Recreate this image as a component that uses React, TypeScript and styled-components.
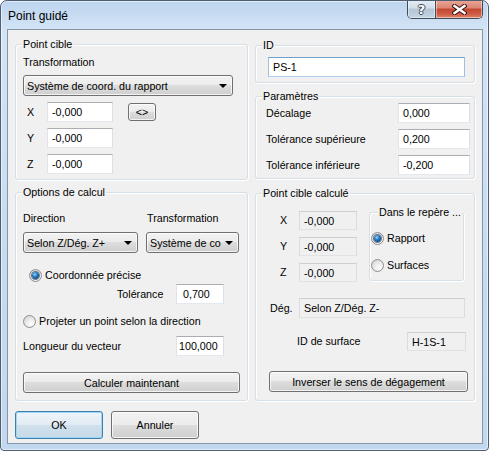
import styled, { createGlobalStyle, css } from "styled-components";

const GlobalStyle = createGlobalStyle`
  * { box-sizing: border-box; }
  html, body { margin: 0; padding: 0; background: #ffffff; }
  body {
    font-family: "Liberation Sans", Arial, sans-serif;
    font-size: 10.7px;
    color: #000;
  }
`;

const Window = styled.div`
  width: 489px;
  height: 451px;
  display: flex;
  flex-direction: column;
  border: 1px solid #4f5e70;
  border-radius: 7px 7px 4px 4px;
  background: linear-gradient(180deg, #bcd4ee 0%, #d3e4f6 28px, #c6dbf1 60%, #c2d8f0 100%);
  box-shadow: inset 0 0 0 1px rgba(255, 255, 255, 0.55);
  overflow: hidden;
`;

const TitleBar = styled.div`
  height: 28px;
  flex: none;
  display: flex;
  align-items: flex-start;
  padding: 0 5px 0 7px;
`;

const Title = styled.div`
  flex: 1;
  font-size: 12px;
  line-height: 28px;
  padding-top: 1px;
`;

const CaptionGroup = styled.div`
  display: flex;
  height: 19px;
  margin-top: -1px;
  border: 1px solid #3f4c5c;
  border-top: none;
  border-radius: 0 0 5px 5px;
  overflow: hidden;
`;

const CaptionButton = styled.div<{ $kind: "help" | "close" }>`
  display: flex;
  align-items: center;
  justify-content: center;
  box-shadow: inset 0 0 0 1px rgba(255, 255, 255, 0.45);
  ${(p) =>
    p.$kind === "help"
      ? css`
          width: 27px;
          background: linear-gradient(180deg, #e6edf5 0%, #d3dee9 45%, #b4c5d7 50%, #c5d4e3 100%);
        `
      : css`
          width: 47px;
          border-left: 1px solid #3f4c5c;
          background: linear-gradient(180deg, #eaa89a 0%, #db8572 45%, #c4452f 50%, #cf5f47 80%, #e0866b 100%);
        `}
`;

const HelpGlyph = styled.span`
  font-family: "DejaVu Sans", sans-serif;
  font-weight: bold;
  font-size: 13px;
  line-height: 1;
  color: #fff;
  text-shadow: 1px 0 0 #3a4656, -1px 0 0 #3a4656, 0 1px 0 #3a4656, 0 -1px 0 #3a4656;
`;

const Client = styled.div`
  flex: 1;
  margin: 0 5px 6px 6px;
  padding: 0 7px;
  display: flex;
  flex-direction: column;
  background: #f0f0f0;
  border: 1px solid #8496a8;
`;

const Columns = styled.div`
  display: flex;
  gap: 7px;
  align-items: flex-start;
`;

const Column = styled.div<{ $w: number }>`
  width: ${(p) => p.$w}px;
  display: flex;
  flex-direction: column;
`;

const Group = styled.div<{ $h: number; $mt: number; $w?: number; $px?: number; $ml?: number }>`
  height: ${(p) => p.$h}px;
  ${(p) => p.$w && `width: ${p.$w}px; flex: none;`}
  margin-top: ${(p) => p.$mt}px;
  margin-left: ${(p) => p.$ml ?? 0}px;
  padding: 0 ${(p) => p.$px ?? 7}px;
  display: flex;
  flex-direction: column;
  align-items: flex-start;
  border: 1px solid #d5dfe5;
  border-radius: 3px;
  box-shadow: inset 1px 1px 0 #fff, 1px 1px 0 #fff;
`;

const Legend = styled.div<{ $ml?: number }>`
  margin: -7px 0 0 ${(p) => p.$ml ?? -1}px;
  padding: 0 1px;
  line-height: 13px;
  white-space: nowrap;
  background: #f0f0f0;
`;

const Label = styled.div<{ $w?: number; $mt?: number; $pl?: number }>`
  ${(p) => p.$w && `width: ${p.$w}px; flex: none;`}
  margin-top: ${(p) => p.$mt ?? 0}px;
  padding-left: ${(p) => p.$pl ?? 0}px;
  line-height: 13px;
  white-space: nowrap;
`;

const Row = styled.div<{ $mt?: number; $pl?: number; $h?: number }>`
  display: flex;
  align-items: center;
  height: ${(p) => p.$h ?? 20}px;
  margin-top: ${(p) => p.$mt ?? 0}px;
  padding-left: ${(p) => p.$pl ?? 0}px;
`;

const HeaderGrid = styled.div<{ $mt: number }>`
  display: grid;
  grid-template-columns: 115px 93px;
  column-gap: 8px;
  margin-top: ${(p) => p.$mt}px;
`;

const ComboRow = styled.div<{ $mt: number }>`
  display: flex;
  gap: 8px;
  margin-top: ${(p) => p.$mt}px;
`;

const Field = styled.input<{ $w: number; $h?: number; $tone?: "edit" | "focus" | "static"; $indent?: number }>`
  width: ${(p) => p.$w}px;
  height: ${(p) => p.$h ?? 20}px;
  flex: none;
  margin: 0;
  padding: 0 0 0 ${(p) => p.$indent ?? 4}px;
  font-family: inherit;
  font-size: 10.7px;
  color: #000;
  outline: none;
  border-radius: 0;
  border: 1px solid;
  border-color: #abadb3 #dbdfe6 #e3e9ef #e2e3ea;
  background: #fff;
  ${(p) =>
    p.$tone === "focus" &&
    css`
      border-color: #6f9dcc #9ebfe2 #b3cfe9 #9ebfe2;
    `}
  ${(p) =>
    p.$tone === "static" &&
    css`
      background: #f0f0f0;
      border-color: #cfcfcf #dcdcdc #e2e2e2 #dcdcdc;
    `}
`;

const bevel = css`
  border: 1px solid #707070;
  border-radius: 3px;
  background: linear-gradient(180deg, #f2f2f2 0%, #ebebeb 50%, #dddddd 50%, #cfcfcf 100%);
  box-shadow: inset 0 0 0 1px rgba(255, 255, 255, 0.75);
`;

const Combo = styled.div<{ $w: number; $mt?: number }>`
  ${bevel}
  width: ${(p) => p.$w}px;
  height: 21px;
  flex: none;
  margin-top: ${(p) => p.$mt ?? 0}px;
  padding: 0 5px 0 3px;
  display: flex;
  align-items: center;
`;

const ComboText = styled.span`
  flex: 1;
  overflow: hidden;
  white-space: nowrap;
`;

const ComboArrow = styled.span`
  flex: none;
  margin-left: 4px;
  width: 0;
  height: 0;
  border-left: 4px solid transparent;
  border-right: 4px solid transparent;
  border-top: 4px solid #000;
`;

const Button = styled.div<{ $w: number; $h?: number; $mt?: number; $ml?: number; $default?: boolean }>`
  ${bevel}
  width: ${(p) => p.$w}px;
  height: ${(p) => p.$h ?? 21}px;
  flex: none;
  margin-top: ${(p) => p.$mt ?? 0}px;
  margin-left: ${(p) => p.$ml ?? 0}px;
  display: flex;
  align-items: center;
  justify-content: center;
  white-space: nowrap;
  ${(p) =>
    p.$default &&
    css`
      border-color: #3c7fb1;
      background: linear-gradient(180deg, #eef4f9 0%, #e2ecf4 50%, #d0e0ec 50%, #c8dae8 100%);
      box-shadow: inset 0 0 0 1px #9fd6f3;
    `}
`;

const Footer = styled.div`
  display: flex;
  gap: 8px;
  margin-top: 10px;
`;

const RadioRow = styled.div<{ $mt: number; $ml?: number }>`
  display: flex;
  align-items: center;
  gap: 3px;
  height: 14px;
  margin-top: ${(p) => p.$mt}px;
  margin-left: ${(p) => p.$ml ?? 0}px;
  white-space: nowrap;
`;

const RadioMark = styled.span<{ $checked?: boolean }>`
  width: 13px;
  height: 13px;
  flex: none;
  border-radius: 50%;
  border: 1px solid #8e8f8f;
  background: radial-gradient(circle at 65% 70%, #ffffff 0%, #ececec 40%, #cdcdcd 100%);
  display: flex;
  align-items: center;
  justify-content: center;
  &::after {
    content: "";
    display: ${(p) => (p.$checked ? "block" : "none")};
    width: 7px;
    height: 7px;
    border-radius: 50%;
    background: radial-gradient(circle at 40% 35%, #9fd8fb 0%, #2f82c8 35%, #0f4c88 70%, #0a3361 100%);
    box-shadow: 0 0 0 1px rgba(20, 45, 80, 0.6);
  }
`;

const TopArea = styled.div`
  display: flex;
  align-items: flex-start;
`;

const CoordColumn = styled.div`
  display: flex;
  flex-direction: column;
  gap: 7px;
  margin-top: 11px;
`;

const CloseGlyph = () => (
  <svg width="15" height="11" viewBox="0 0 15 11">
    <path d="M2.5 2 L12.5 9 M12.5 2 L2.5 9" stroke="#3a1510" strokeWidth="4.4" strokeLinecap="square" />
    <path d="M2.5 2 L12.5 9 M12.5 2 L2.5 9" stroke="#ffffff" strokeWidth="2.4" strokeLinecap="square" />
  </svg>
);

const Radio = ({ label, checked, mt, ml }: { label: string; checked?: boolean; mt: number; ml?: number }) => (
  <RadioRow $mt={mt} $ml={ml}>
    <RadioMark $checked={checked} />
    <span>{label}</span>
  </RadioRow>
);

const App = () => {
  return (
    <>
      <GlobalStyle />
      <Window>
        <TitleBar>
          <Title>Point guidé</Title>
          <CaptionGroup>
            <CaptionButton $kind="help">
              <HelpGlyph>?</HelpGlyph>
            </CaptionButton>
            <CaptionButton $kind="close">
              <CloseGlyph />
            </CaptionButton>
          </CaptionGroup>
        </TitleBar>
        <Client>
          <Columns>
            <Column $w={233}>
              <Group $h={136} $mt={14}>
                <Legend>Point cible</Legend>
                <Label $mt={5}>Transformation</Label>
                <Combo $w={210} $mt={6}>
                  <ComboText>Système de coord. du rapport</ComboText>
                  <ComboArrow />
                </Combo>
                {["X", "Y", "Z"].map((axis) => (
                  <Row key={axis} $mt={6}>
                    <Label $w={24} $pl={4}>{axis}</Label>
                    <Field $w={66} defaultValue="-0,000" />
                    {axis === "X" && (
                      <Button $w={28} $h={18} $ml={15}>
                        &lt;&gt;
                      </Button>
                    )}
                  </Row>
                ))}
              </Group>
              <Group $h={209} $mt={12}>
                <Legend>Options de calcul</Legend>
                <HeaderGrid $mt={13}>
                  <Label>Direction</Label>
                  <Label $pl={1}>Transformation</Label>
                </HeaderGrid>
                <ComboRow $mt={7}>
                  <Combo $w={115}>
                    <ComboText>Selon Z/Dég. Z+</ComboText>
                    <ComboArrow />
                  </Combo>
                  <Combo $w={93}>
                    <ComboText>Système de coord. du rapport</ComboText>
                    <ComboArrow />
                  </Combo>
                </ComboRow>
                <Radio label="Coordonnée précise" checked mt={15} ml={6} />
                <Row $mt={2} $pl={94}>
                  <Label $w={59}>Tolérance</Label>
                  <Field $w={48} $indent={6} defaultValue="0,700" />
                </Row>
                <Radio label="Projeter un point selon la direction" mt={10} />
                <Row $mt={8}>
                  <Label $w={153}>Longueur du vecteur</Label>
                  <Field $w={48} $indent={2} defaultValue="100,000" />
                </Row>
                <Button $w={217} $mt={16}>Calculer maintenant</Button>
              </Group>
            </Column>
            <Column $w={220}>
              <Group $h={38} $mt={15}>
                <Legend>ID</Legend>
                <Row $mt={5} $pl={5}>
                  <Field $w={197} $tone="focus" defaultValue="PS-1" />
                </Row>
              </Group>
              <Group $h={83} $mt={13}>
                <Legend>Paramètres</Legend>
                <Row $pl={3}>
                  <Label $w={132}>Décalage</Label>
                  <Field $w={72} defaultValue="0,000" />
                </Row>
                <Row $mt={6} $pl={3}>
                  <Label $w={132}>Tolérance supérieure</Label>
                  <Field $w={72} defaultValue="0,200" />
                </Row>
                <Row $mt={6} $pl={3}>
                  <Label $w={132}>Tolérance inférieure</Label>
                  <Field $w={72} defaultValue="-0,200" />
                </Row>
              </Group>
              <Group $h={208} $mt={14}>
                <Legend>Point cible calculé</Legend>
                <TopArea>
                  <CoordColumn>
                    {["X", "Y", "Z"].map((axis) => (
                      <Row key={axis} $h={19} $pl={17}>
                        <Label $w={19}>{axis}</Label>
                        <Field $w={58} $h={19} $tone="static" readOnly defaultValue="-0,000" />
                      </Row>
                    ))}
                  </CoordColumn>
                  <Group $h={69} $mt={12} $w={95} $px={1} $ml={12}>
                    <Legend $ml={7}>Dans le repère ...</Legend>
                    <Radio label="Rapport" checked mt={12} />
                    <Radio label="Surfaces" mt={13} />
                  </Group>
                </TopArea>
                <Row $mt={16} $pl={7}>
                  <Label $w={29}>Dég.</Label>
                  <Field $w={166} $tone="static" readOnly defaultValue="Selon Z/Dég. Z-" />
                </Row>
                <Row $mt={14} $pl={34} $h={19}>
                  <Label $w={110}>ID de surface</Label>
                  <Field $w={59} $h={19} $tone="static" readOnly defaultValue="H-1S-1" />
                </Row>
                <Button $w={199} $mt={20} $ml={6}>Inverser le sens de dégagement</Button>
              </Group>
            </Column>
          </Columns>
          <Footer>
            <Button $w={88} $h={28} $default>OK</Button>
            <Button $w={88} $h={28}>Annuler</Button>
          </Footer>
        </Client>
      </Window>
    </>
  );
};

export default App;
